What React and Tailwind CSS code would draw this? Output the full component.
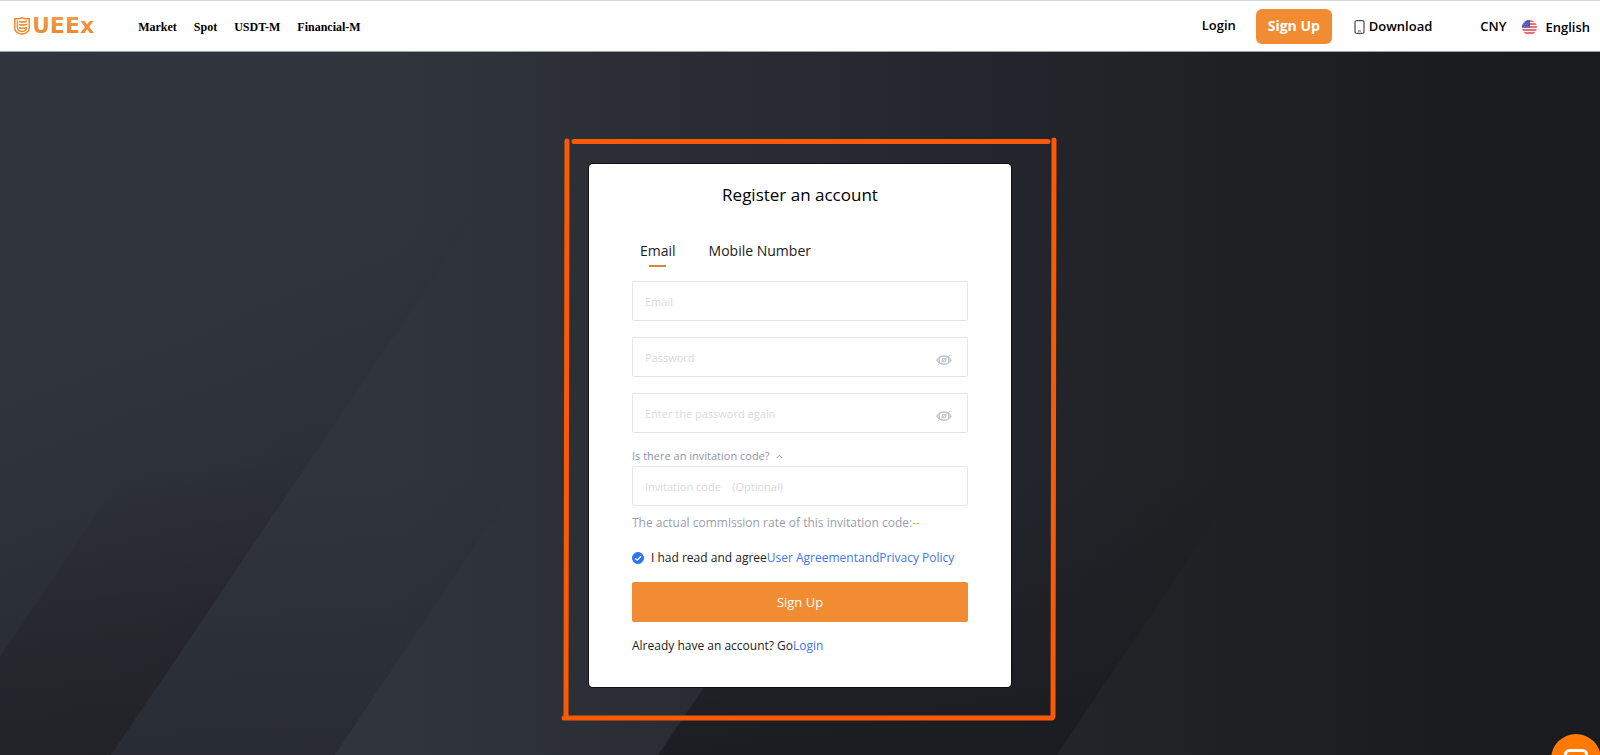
import React, { useState } from "react";

const navLinks = ["Market", "Spot", "USDT-M", "Financial-M"];

const Logo = () => (
  <a href="#home" className="flex items-center gap-[2px]" aria-label="UEEx">
    <svg width="16" height="18" viewBox="0 0 16 18" fill="none" stroke="#f08c33">
      <path d="M.8 1.700H5L8 .8l3 .9h4.200V11c0 3.500-2.800 5.500-7.200 6C3.600 16.500.8 14.500.8 11Z" strokeWidth="1.500" />
      <path d="M3.400 3.500V10.500c0 2.200 1.500 3.600 4.600 4 3.100-.4 4.600-1.800 4.600-4" strokeWidth="1.400" />
      <path d="M5 4.500c2.500.8 5 .7 8-.3M5 7.600c2.500.8 5 .7 8-.3M5 10.700c2.500.8 5 .7 8-.3" strokeWidth="1.600" />
    </svg>
    <span className="bg-linear-to-b from-[#f6a04d] to-[#e9822a] bg-clip-text font-['DejaVu_Sans',sans-serif] text-[22px] leading-6 font-bold text-transparent">
      UEEx
    </span>
  </a>
);

const Flag = () => (
  <svg width="15" height="15" viewBox="0 0 16 16">
    <defs>
      <clipPath id="flag-circle">
        <circle cx="8" cy="8" r="8" />
      </clipPath>
    </defs>
    <g clipPath="url(#flag-circle)">
      <rect width="16" height="16" fill="#fbeff0" />
      <path d="M0 1h16M0 4.200h16M0 7.400h16M0 10.600h16M0 13.800h16" stroke="#dd4a55" strokeWidth="1.600" />
      <rect width="8.500" height="8" fill="#3f55b5" />
      <path d="M2 3h6M1 5h6M2 7h6" stroke="#a9b6e6" strokeWidth=".7" strokeDasharray="1 1" />
    </g>
  </svg>
);

const EyeOff = () => (
  <svg width="16" height="12" viewBox="0 0 16 12" fill="none" stroke="#c3c6d3">
    <path d="M1 6.200C2.800 3.400 5.200 2 8 2s5.200 1.400 7 4.200C13.200 9 10.800 10.300 8 10.300S2.800 9 1 6.200Z" strokeWidth="1.400" />
    <path d="M3.200 4.500v3.500M12.800 4.500v3.500" strokeWidth="1.500" />
    <circle cx="8" cy="6.200" r="1.900" strokeWidth="1.100" />
    <path d="M1.500 11.500 14.500.7" strokeWidth="1" />
  </svg>
);

const Backdrop = () => (
  <svg
    className="absolute inset-0 -z-10 h-full w-full"
    viewBox="0 0 1600 703"
    preserveAspectRatio="none"
    aria-hidden="true"
  >
    <defs>
      <linearGradient id="base">
        <stop offset="0" stopColor="#31363e" />
        <stop offset=".25" stopColor="#30353c" />
        <stop offset=".38" stopColor="#2b2f35" />
        <stop offset=".64" stopColor="#23252c" />
        <stop offset=".72" stopColor="#212226" />
        <stop offset=".9" stopColor="#1b1c20" />
        <stop offset="1" stopColor="#1a1b1f" />
      </linearGradient>
      <linearGradient id="shade-a" gradientUnits="userSpaceOnUse" x1="485" y1="150" x2="615" y2="600">
        <stop offset="0" stopColor="#212329" stopOpacity="0" />
        <stop offset="1" stopColor="#212329" stopOpacity=".7" />
      </linearGradient>
      <linearGradient id="shade-b" gradientUnits="userSpaceOnUse" x1="316" y1="400" x2="346" y2="703">
        <stop offset="0" stopColor="#212127" stopOpacity="0" />
        <stop offset=".7" stopColor="#212127" stopOpacity=".6" />
        <stop offset="1" stopColor="#212125" stopOpacity=".9" />
      </linearGradient>
      <linearGradient id="shade-c" gradientUnits="userSpaceOnUse" x1="0" y1="420" x2="0" y2="703">
        <stop offset="0" stopColor="#202229" stopOpacity="0" />
        <stop offset="1" stopColor="#202229" stopOpacity=".5" />
      </linearGradient>
      <linearGradient id="shade-d" gradientUnits="userSpaceOnUse" x1="0" y1="420" x2="0" y2="690">
        <stop offset="0" stopColor="#1a1b20" stopOpacity="0" />
        <stop offset="1" stopColor="#1a1b20" stopOpacity=".85" />
      </linearGradient>
    </defs>
    <rect width="1600" height="703" fill="url(#base)" />
    <path d="M0 150H485L111 703H0Z" fill="url(#shade-a)" />
    <path d="M0 605 138 400H316L111 703H0Z" fill="url(#shade-b)" />
    <path d="M111 703 302 420H524L335 703Z" fill="url(#shade-c)" />
    <path d="M658 703 849 420H1247L1057 703Z" fill="url(#shade-d)" />
  </svg>
);

const Highlight = () => (
  <svg
    className="pointer-events-none absolute -top-8 -left-8 h-[600px] w-[510px]"
    viewBox="0 0 510 600"
    fill="none"
    stroke="#fa5a05"
    strokeWidth="5"
    strokeLinecap="round"
    aria-hidden="true"
  >
    <path d="M10 9 9 585M17 9.500H491M497 8 496 585M7 586H495" />
  </svg>
);

const inputClass =
  "h-10 w-full rounded-xs border border-[#e6e6e8] bg-white px-3 text-[11px] text-gray-700 outline-none placeholder:text-[#dadade]";

const PasswordField = ({ label }) => {
  const [visible, setVisible] = useState(false);

  return (
    <div className="relative">
      <input
        type={visible ? "text" : "password"}
        aria-label={label}
        placeholder={label}
        className={inputClass}
      />
      <button
        type="button"
        aria-label="Toggle password"
        onClick={() => setVisible(!visible)}
        className="absolute top-[17px] right-4"
      >
        <EyeOff />
      </button>
    </div>
  );
};

const Header = () => (
  <header className="flex h-[52px] items-center justify-between border-t border-b border-t-gray-300 border-b-gray-400 bg-white pr-[10px] pl-[14px]">
    <div className="flex items-center gap-11">
      <Logo />
      <nav className="flex gap-[17px] pt-[2px] font-['Liberation_Serif',serif] text-xs font-bold">
        {navLinks.map((link) => (
          <a key={link} href={`#${link}`}>
            {link}
          </a>
        ))}
      </nav>
    </div>
    <div className="flex items-center text-[13px] font-semibold">
      <a href="#login">Login</a>
      <button type="button" className="ml-5 h-[35px] w-[76px] rounded-md bg-[#f18c33] text-sm font-bold text-white">
        Sign Up
      </button>
      <a href="#download" className="ml-[22px] flex items-center gap-1 pt-px">
        <svg width="11" height="14" viewBox="0 0 11 14" fill="none" stroke="#222">
          <rect x="1" y=".7" width="9" height="12.600" rx="1.200" />
          <path d="M4 11h3" strokeWidth=".8" />
        </svg>
        Download
      </a>
      <button type="button" className="ml-12 pt-px">CNY</button>
      <button type="button" className="ml-4 flex items-center gap-2 pt-[3px]">
        <Flag />
        English
      </button>
    </div>
  </header>
);

const App = () => {
  const [tab, setTab] = useState("Email");
  const [agreed, setAgreed] = useState(true);

  return (
    <div className="flex min-h-screen flex-col overflow-hidden font-['Open_Sans',sans-serif] text-black">
      <Header />
      <main className="relative isolate flex flex-1 items-start justify-center pt-28 pb-[68px]">
        <Backdrop />
        <div className="relative">
          <form
            onSubmit={(e) => e.preventDefault()}
            className="w-[422px] rounded bg-white px-[43px] pt-[17px] pb-[31px] text-xs leading-5 text-[#222] ring-1 ring-black/60"
          >
            <h1 className="text-center text-[17px] leading-7 text-black">Register an account</h1>

            {/* Tabs */}
            <div className="mt-[29px] flex h-[29px] items-start gap-[33px] px-2">
              {["Email", "Mobile Number"].map((name) => (
                <button
                  key={name}
                  type="button"
                  onClick={() => setTab(name)}
                  className="flex flex-col items-center gap-px text-sm leading-[26px]"
                >
                  {name}
                  {tab === name && <span className="h-[2px] w-[17px] bg-[#dc8535]" />}
                </button>
              ))}
            </div>

            {/* Credentials */}
            <div className="mt-[14px] flex flex-col gap-4">
              <input type="text" aria-label={tab} placeholder={tab} className={inputClass} />
              <PasswordField label="Password" />
              <PasswordField label="Enter the password again" />
            </div>

            {/* Invitation code */}
            <label htmlFor="invite" className="mt-[13px] flex items-center gap-[6px] text-[11px] leading-5 text-[#8f95a8]">
              Is there an invitation code?
              <svg width="7" height="5" viewBox="0 0 7 5" fill="none" stroke="currentColor">
                <path d="m.8 4 2.700-2.700L6.200 4" />
              </svg>
            </label>
            <input
              id="invite"
              type="text"
              placeholder={"Invitation code \u00a0\u00a0 (Optional)"}
              className={inputClass}
            />
            <p className="mt-[7px] text-[#999faa]">
              The actual commission rate of this invitation code:<span className="text-[#e0a070]">--</span>
            </p>

            {/* Agreement */}
            <div className="mt-[15px] flex items-center gap-[7px]">
              <span className="relative flex">
                <input
                  id="agree"
                  type="checkbox"
                  checked={agreed}
                  onChange={(e) => setAgreed(e.target.checked)}
                  className="size-3 appearance-none rounded-full border border-[#2f74f0] checked:bg-[#2f74f0]"
                />
                <svg className="pointer-events-none absolute inset-0" width="12" height="12" viewBox="0 0 12 12" fill="none" stroke="#fff" strokeWidth="1.300">
                  <path d="m3 6.200 2.200 2L9 4.200" />
                </svg>
              </span>
              <p>
                <label htmlFor="agree">I had read and agree</label>
                <a href="#terms" className="text-[#3f76ea]">User Agreement</a>
                <span className="text-[#3f76ea]">and</span>
                <a href="#privacy" className="text-[#3f76ea]">Privacy Policy</a>
              </p>
            </div>

            <button type="submit" className="mt-[14px] h-10 w-full rounded-xs bg-[#f18c33] text-[13px] text-white">
              Sign Up
            </button>
            <p className="mt-[14px]">
              Already have an account? Go<a href="#login" className="text-[#3f76ea]">Login</a>
            </p>
          </form>
          <Highlight />
        </div>
      </main>

      <button
        type="button"
        aria-label="Chat"
        className="fixed -right-px -bottom-[29px] flex size-[50px] justify-center rounded-full bg-[#ff7a05] pt-[15px]"
      >
        <svg width="24" height="22" viewBox="0 0 24 22" fill="none" stroke="#fff" strokeWidth="3">
          <rect x="1.500" y="1.500" width="21" height="17" rx="4" />
        </svg>
      </button>
    </div>
  );
};

export default App;
